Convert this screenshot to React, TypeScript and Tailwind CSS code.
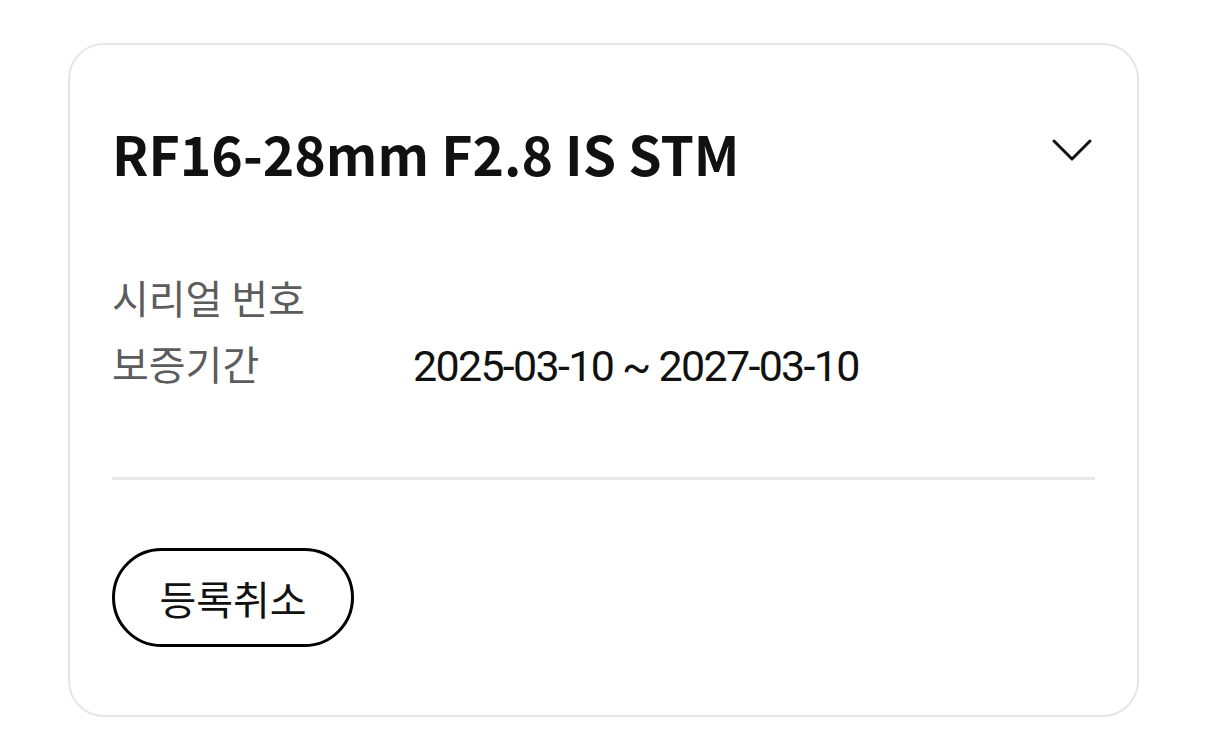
const KR = "font-['Noto_Sans_CJK_KR',sans-serif]";

function InfoRow({ label, value }: { label: string; value: string }) {
  return (
    <div className="flex items-center h-[66px]">
      <span className={`w-[301px] shrink-0 text-[40px] text-[#5c5c5c] ${KR}`}>{label}</span>
      <span className="pt-[6px] text-[43px] tracking-[-1.7px] text-[#111] font-['Roboto',sans-serif]">{value}</span>
    </div>
  );
}

export default function App() {
  return (
    <div className="min-h-[750px] bg-white pt-[43px] pl-[68px]">
      <div className="w-[1071px] h-[674px] rounded-[36px] border-2 border-[#e6e6e6] bg-white px-[42px] pt-[76px]">
        <div className="flex items-center justify-between h-[64px]">
          <h1 className={`text-[53.5px] font-bold leading-none text-[#111] ${KR}`}>RF16-28mm F2.8 IS STM</h1>
          <svg width="40" height="23" viewBox="0 0 40 23" className="mr-[3px] mb-[6px]" fill="none">
            <polyline points="2,2 20,20 38,2" stroke="#111" strokeWidth="3" strokeLinecap="round" strokeLinejoin="round" />
          </svg>
        </div>
        <div className="mt-[79px]">
          <InfoRow label="시리얼 번호" value="" />
          <InfoRow label="보증기간" value="2025-03-10 ~ 2027-03-10" />
        </div>
        <div className="mt-[81px] h-[3px] bg-[#e8e8e8]" />
        <button
          className={`mt-[68px] w-[242px] h-[99px] rounded-full border-[3px] border-black text-[40px] text-[#111] ${KR}`}
        >
          등록취소
        </button>
      </div>
    </div>
  );
}
